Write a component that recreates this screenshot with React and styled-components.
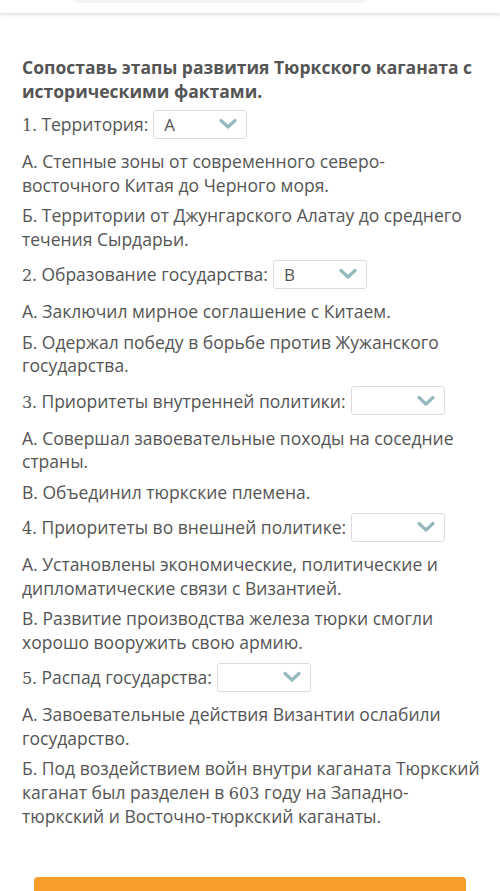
import React from "react";
import styled, { createGlobalStyle } from "styled-components";

const GlobalStyle = createGlobalStyle`
    html, body {
        margin: 0;
        padding: 0;
        background: #fff;
    }
    body {
        font-family: "Open Sans", "Noto Sans", sans-serif;
        color: #555;
        width: 500px;
        height: 891px;
        overflow: hidden;
    }
`

const TopBar = styled.div`
    position: sticky;
    top: 0;
    z-index: 2;
    height: 13px;
    background: #fff;
    box-shadow: 0 2px 3px rgba(0, 0, 0, 0.12);
    overflow: hidden;
`, SearchPill = styled.div`
    width: 300px;
    height: 20px;
    margin: -17px 0 0 70px;
    border-radius: 10px;
    background: #f3f3f3;
`, Page = styled.div`
    padding: 0 20px 0 22px;
`, CutLine = styled.p`
    margin: -17px 0 0;
    font-size: 16px;
    line-height: 20px;
    color: #333;
`, Title = styled.h2`
    margin: 40px 0 0;
    font-size: 17.5px;
    line-height: 23.5px;
    font-weight: 700;
    color: #555;
`, Question = styled.div`
    display: flex;
    align-items: center;
    gap: 5px;
    margin-top: ${p => p.$first ? "6px" : "8px"};
    font-size: 17.5px;
    height: 30px;
`, Digits = styled.span`
    font-family: "DejaVu Serif", "Liberation Serif", serif;
    font-size: 0.92em;
`, Select = styled.div`
    display: flex;
    align-items: center;
    justify-content: space-between;
    box-sizing: border-box;
    width: 94px;
    height: 29px;
    padding: 0 9px 0 10px;
    border: 1px solid #dcdcdc;
    border-radius: 3px;
    background: #fff;
    font-size: 17px;
    color: #555;
`, Answer = styled.p`
    margin: ${p => p.$lead ? "11px" : "7px"} 0 0;
    font-size: 17.5px;
    line-height: 23.5px;
`, ButtonWrap = styled.div`
    padding: 0 34px;
    margin-top: 48px;
`, Button = styled.div`
    height: 40px;
    border-radius: 4px 4px 0 0;
    background: #f89d29;
`

const Chevron = () => (
    <svg width="18" height="12" viewBox="0 0 18 12">
        <path d="M2 2.5 L9 9 L16 2.5" fill="none" stroke="#94b9bc" strokeWidth="3.2" strokeLinecap="round" strokeLinejoin="round" />
    </svg>
)

const withDigits = text => text.split(/(\d+)/).map((part, i) =>
    /^\d+$/.test(part) ? <Digits key={i}>{part}</Digits> : part
)

const items = [
    {
        q: "1. Территория:",
        value: "А",
        answers: [
            "А. Степные зоны от современного северо-восточного Китая до Черного моря.",
            "Б. Территории от Джунгарского Алатау до среднего течения Сырдарьи.",
        ],
    },
    {
        q: "2. Образование государства:",
        value: "B",
        answers: [
            "А. Заключил мирное соглашение с Китаем.",
            "Б. Одержал победу в борьбе против Жужанского государства.",
        ],
    },
    {
        q: "3. Приоритеты внутренней политики:",
        value: "",
        answers: [
            "А. Совершал завоевательные походы на соседние страны.",
            "В. Объединил тюркские племена.",
        ],
    },
    {
        q: "4. Приоритеты во внешней политике:",
        value: "",
        answers: [
            "А. Установлены экономические, политические и дипломатические связи с Византией.",
            "В. Развитие производства железа тюрки смогли хорошо вооружить свою армию.",
        ],
    },
    {
        q: "5. Распад государства:",
        value: "",
        answers: [
            "А. Завоевательные действия Византии ослабили государство.",
            "Б. Под воздействием войн внутри каганата Тюркский каганат был разделен в 603 году на Западно-тюркский и Восточно-тюркский каганаты.",
        ],
    },
]

export default class App extends React.Component {
    render() {
        return (
            <>
                <GlobalStyle />
                <TopBar>
                    <SearchPill />
                </TopBar>
                <Page>
                    <CutLine>&nbsp;</CutLine>
                    <Title>Сопоставь этапы развития Тюркского каганата с историческими фактами.</Title>
                    {items.map((item, i) => (
                        <React.Fragment key={i}>
                            <Question $first={i === 0}>
                                <span>{withDigits(item.q)}</span>
                                <Select>
                                    <span>{item.value}</span>
                                    <Chevron />
                                </Select>
                            </Question>
                            {item.answers.map((a, j) => (
                                <Answer key={j} $lead={j === 0}>{withDigits(a)}</Answer>
                            ))}
                        </React.Fragment>
                    ))}
                </Page>
                <ButtonWrap>
                    <Button />
                </ButtonWrap>
            </>
        )
    }
}
